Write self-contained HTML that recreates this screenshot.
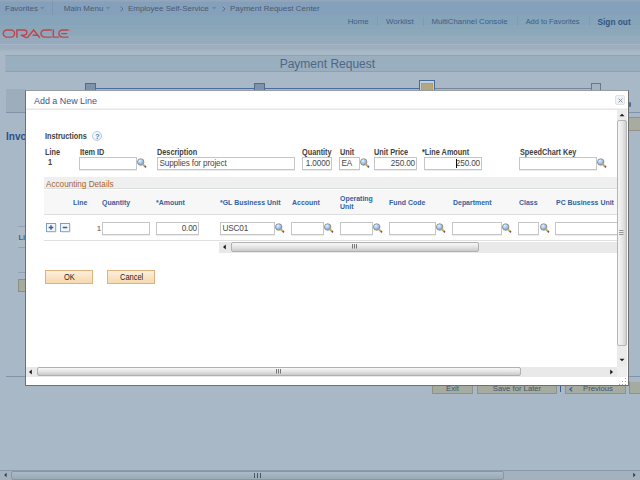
<!DOCTYPE html>
<html><head><meta charset="utf-8">
<style>
*{margin:0;padding:0;box-sizing:border-box}
html,body{width:640px;height:480px;overflow:hidden;background:#a9b8c7;font-family:"Liberation Sans",sans-serif}
div,span,svg{position:absolute;white-space:nowrap}
.nt{font-size:8px;color:#4b5b6f;top:5px;line-height:8px}
.lk{font-size:7.8px;color:#3e5e8a;top:18px;line-height:8px}
.sep{width:1px;background:#819ab0}
.lbl{font-size:8.3px;font-weight:bold;color:#404040;line-height:8px;transform:scaleX(0.88);transform-origin:0 0}
.inp{border:1px solid #c6c6c6;box-shadow:0 1px 0 #ececec;background:#fff;height:12px;font-size:8.2px;letter-spacing:-0.15px;color:#474747;line-height:12px;padding:0 1px 0 1.5px;overflow:hidden}
.r{text-align:right}
.hd{font-size:7.9px;font-weight:bold;color:#3462a0;line-height:8px;transform:scaleX(0.88);transform-origin:0 0}
.btn{background:#a6ab9f;border:1px solid #8e9388;border-top-color:#b4b8ae;font-size:7.7px;color:#44546a;text-align:center;line-height:14px}
</style></head><body>
<div style="left:0px;top:0px;width:640px;height:16px;background:#85a0bb"></div>
<div style="left:0px;top:0px;width:640px;height:1px;background:#93a6bb"></div>
<div style="left:0px;top:1px;width:640px;height:1px;background:#8ca3bb"></div>
<div class="nt" style="left:5px;top:5px;">Favorites</div>
<svg style="left:39.5px;top:7px" width="5" height="3"><path d="M0 0H4.5L2.25 2.5Z" fill="#6e87a2"/></svg>
<div style="left:52px;top:1px;width:1px;height:15px;background:#7d96ad"></div>
<div class="nt" style="left:63.8px;top:5px;">Main Menu</div>
<svg style="left:105.5px;top:7px" width="5" height="3"><path d="M0 0H4.5L2.25 2.5Z" fill="#6e87a2"/></svg>
<svg style="left:119.5px;top:6px" width="4" height="6"><path d="M0.6 0.6L3 3L0.6 5.4" fill="none" stroke="#5a6b80" stroke-width="0.9"/></svg>
<div class="nt" style="left:127.9px;top:5px;">Employee Self-Service</div>
<svg style="left:212.3px;top:7px" width="5" height="3"><path d="M0 0H4.5L2.25 2.5Z" fill="#6e87a2"/></svg>
<svg style="left:221.8px;top:6px" width="4" height="6"><path d="M0.6 0.6L3 3L0.6 5.4" fill="none" stroke="#5a6b80" stroke-width="0.9"/></svg>
<div class="nt" style="left:229.9px;top:5px;">Payment Request Center</div>
<div style="left:0px;top:15px;width:640px;height:1px;background:#8aa2b6"></div>
<div style="left:0px;top:16px;width:640px;height:10px;background:#86a4ba"></div>
<div style="left:0px;top:26px;width:640px;height:1px;background:#8ca8bb"></div>
<div style="left:0px;top:27px;width:640px;height:8px;background:linear-gradient(#89a6b9,#8ea8ba)"></div>
<div style="left:0px;top:35px;width:640px;height:9px;background:linear-gradient(#92aabb,#96acbd)"></div>
<div style="left:0px;top:37px;width:640px;height:1px;background:#95acbe"></div>
<div style="left:0px;top:40px;width:640px;height:1px;background:#97adbf"></div>
<div style="left:0px;top:44px;width:640px;height:1px;background:#a3b5c7"></div>
<div style="left:0px;top:45px;width:640px;height:1px;background:#9cafc1"></div>
<div style="left:0px;top:46px;width:640px;height:3px;background:#a0aec2"></div>
<div style="left:0px;top:49px;width:640px;height:1px;background:#a2b1c3"></div>
<div style="left:0px;top:50px;width:640px;height:1px;background:#a3b5bd"></div>
<div class="lk" style="left:347.7px;top:18px;">Home</div>
<div style="left:377px;top:17px;width:1px;height:9px;background:#819ab0"></div>
<div class="lk" style="left:386px;top:18px;">Worklist</div>
<div style="left:422.5px;top:17px;width:1px;height:9px;background:#819ab0"></div>
<div class="lk" style="left:431.4px;top:18px;">MultiChannel Console</div>
<div style="left:516.5px;top:17px;width:1px;height:9px;background:#819ab0"></div>
<div class="lk" style="left:525.7px;top:18px;font-size:7.4px">Add to Favorites</div>
<div style="left:588.5px;top:17px;width:1px;height:9px;background:#819ab0"></div>
<div class="lk" style="left:597.5px;top:18px;font-weight:bold;font-size:8.3px;color:#34547f">Sign out</div>
<svg style="left:0;top:27px" width="72" height="13" viewBox="0 27 72 13"><g fill="none" stroke="#bf4452" stroke-width="1.45">
<rect x="3.3" y="30" width="11.3" height="7.1" rx="3.55"/>
<path d="M16.9 37.8V30H24.2A2.6 2.6 0 0 1 24.2 35.2H20.8L26.8 37.8"/>
<path d="M27.4 37.8L33.6 30L39.8 37.8M32.6 35.3H37.3"/>
<path d="M51.8 30H44.5A3.55 3.55 0 0 0 44.5 37.1H51.8"/>
<path d="M53.3 29.4V37.1H59.2"/>
<path d="M68.6 30H62.4A3.55 3.55 0 0 0 62.4 37.1H68.6M61.3 33.6H67.2"/>
</g><circle cx="70.3" cy="30.2" r="0.7" fill="#c47a84"/></svg>
<div style="left:0px;top:51px;width:640px;height:4px;background:#aab9c8"></div>
<div style="left:5px;top:55px;width:635px;height:17px;background:#99aebe;border-top:1px solid #91a2b1;border-bottom:1px solid #8fa0af;border-left:1px solid #a0b2c1"></div>
<div style="left:279.7px;top:57px;font-size:12px;color:#4d6786;line-height:14px">Payment Request</div>
<div style="left:95px;top:88px;width:325px;height:1px;background:#4b6b9b"></div>
<div style="left:435px;top:88px;width:156px;height:1px;background:#72869c"></div>
<div style="left:85px;top:83px;width:11px;height:8px;background:#7b93ad;border:1px solid #4f6d90;border-bottom:none"></div>
<div style="left:254px;top:83px;width:11px;height:8px;background:#7b93ad;border:1px solid #4f6d90;border-bottom:none"></div>
<div style="left:419px;top:80px;width:16px;height:11px;background:#c3d0dc;border:1px solid #4a6b98;border-bottom:none"></div>
<div style="left:421px;top:82.5px;width:11.5px;height:9px;background:#b0a783;border:1px solid #be9a55;border-bottom:none"></div>
<div style="left:591px;top:83px;width:10px;height:8px;background:#a2b3c2;border:1px solid #64798f;border-bottom:none"></div>
<div style="left:6px;top:89px;width:20px;height:23px;background:#9eadbb"></div>
<div style="left:6px;top:112px;width:634px;height:1px;background:#7f94a9"></div>
<div style="left:628px;top:117px;width:12px;height:14px;background:#a7aba0;border-top:1px solid #958f84;border-bottom:1px solid #958f84"></div>
<div style="left:629px;top:102px;width:2px;height:5px;background:#4a6d9c;border-radius:1px"></div>
<div style="left:6px;top:131.5px;font-size:10px;font-weight:bold;color:#2b5087;line-height:10px">Invo</div>
<div style="left:18px;top:227px;width:8px;height:20px;background:#abbac4"></div>
<div style="left:18px;top:226px;width:8px;height:1px;background:#90a2b4"></div>
<div style="left:18.5px;top:233.5px;font-size:7.5px;font-weight:bold;color:#3b6090;line-height:8px">Li</div>
<div style="left:18px;top:247px;width:8px;height:1px;background:#90a2b4"></div>
<div style="left:18px;top:272px;width:8px;height:1px;background:#90a2b4"></div>
<div style="left:18px;top:279px;width:8px;height:13px;background:#a6aba0;border:1px solid #8c8f86"></div>
<div style="left:6px;top:376px;width:634px;height:1px;background:#7f94a9"></div>
<div class="btn" style="left:432px;top:381px;width:41px;height:13px">Exit</div>
<div class="btn" style="left:477px;top:381px;width:80px;height:13px">Save for Later</div>
<div style="left:560px;top:386px;width:1px;height:6px;background:#3d5c96"></div>
<div class="btn" style="left:565px;top:381px;width:61px;height:13px"><svg style="left:2.5px;top:4.5px" width="4" height="5"><path d="M3.2 0.3L0.8 2.3L3.2 4.3" fill="none" stroke="#3b5fa8" stroke-width="1.2"/></svg><span style="left:17px;top:0">Previous</span></div>
<div class="btn" style="left:629px;top:381px;width:20px;height:13px"></div>
<div style="left:0px;top:470px;width:640px;height:10px;background:#a4b2bf;border-top:1px solid #8a9aa8"></div>
<div style="left:11px;top:471px;width:493px;height:9px;background:linear-gradient(#aebbc7,#9aa9b6);border:1px solid #8797a6;border-radius:2px"></div>
<div style="left:254px;top:473px;width:7px;height:5px;border-left:1px solid #4a5866;border-right:1px solid #4a5866"></div>
<div style="left:257px;top:473px;width:1px;height:5px;background:#4a5866"></div>
<svg style="left:3px;top:472px" width="5" height="6"><path d="M3.6 0.8L1.2 3L3.6 5.2Z" fill="#2f3a45"/></svg>
<svg style="left:632px;top:472px" width="5" height="6"><path d="M1.2 0.8L3.6 3L1.2 5.2Z" fill="#2f3a45"/></svg>
<svg width="0" height="0" style="position:absolute"><defs><radialGradient id="lg" cx="35%" cy="30%" r="75%"><stop offset="0" stop-color="#e8f4ff"/><stop offset="1" stop-color="#5f9de4"/></radialGradient></defs></svg>
<div style="left:25px;top:90px;width:604px;height:296px;background:#fff;border:1px solid #6f6f6f;border-top-color:#979ca2"></div>
<div style="left:34px;top:96px;font-size:9.4px;color:#335890;line-height:9px;transform:scaleX(0.95);transform-origin:0 0">Add a New Line</div>
<div style="left:615px;top:95px;width:10px;height:10px;background:#f1f1f1;border:1px solid #e2e2e2;border-radius:2px"><svg style="left:1px;top:1px" width="7" height="7"><path d="M1.6 1.6L5.4 5.4M5.4 1.6L1.6 5.4" stroke="#8397ab" stroke-width="1"/></svg></div>
<div style="left:26px;top:108px;width:602px;height:1px;background:#f2f2f2"></div>
<div style="left:26px;top:109px;width:602px;height:1px;background:#e1e8e7"></div>
<div style="left:26px;top:110px;width:591px;height:257px;overflow:hidden"><div style="left:-26px;top:-110px;width:640px;height:480px">
<div class="lbl" style="left:44.6px;top:132px;">Instructions</div>
<div style="left:92px;top:131px;width:10px;height:10px;border-radius:50%;border:1px solid #b7c9dc;background:radial-gradient(circle at 40% 35%,#ffffff,#dfe9f3)"></div>
<div style="left:95px;top:133px;font-size:7.5px;font-weight:bold;color:#4f7fbf;line-height:8px">?</div>
<div class="lbl" style="left:44.6px;top:148px;">Line</div>
<div class="lbl" style="left:79.6px;top:148px;">Item ID</div>
<div class="lbl" style="left:157px;top:148px;">Description</div>
<div class="lbl" style="left:302px;top:148px;">Quantity</div>
<div class="lbl" style="left:339.7px;top:148px;">Unit</div>
<div class="lbl" style="left:374.4px;top:148px;">Unit Price</div>
<div class="lbl" style="left:421.9px;top:148px;">*Line Amount</div>
<div class="lbl" style="left:519.9px;top:148px;">SpeedChart Key</div>
<div class="lbl" style="left:48.2px;top:158.2px;">1</div>
<div class="inp" style="left:79px;top:157px;width:58px;height:13px"></div>
<svg style="left:137px;top:157.5px" width="11" height="11" viewBox="0 0 11 11"><circle cx="3.7" cy="4" r="3.25" fill="url(#lg)" stroke="#8b8575" stroke-width="0.8"/><line x1="5.6" y1="6" x2="8.1" y2="8.5" stroke="#e6a24c" stroke-width="1.8"/><line x1="7.8" y1="8.2" x2="9" y2="9.4" stroke="#45648c" stroke-width="1.7"/></svg>
<div class="inp" style="left:157px;top:157px;width:138px;height:13px">Supplies for project</div>
<div class="inp r" style="left:302px;top:157px;width:30px;height:13px">1.0000</div>
<div class="inp" style="left:339px;top:157px;width:20.5px;height:13px">EA</div>
<svg style="left:359.5px;top:157.5px" width="11" height="11" viewBox="0 0 11 11"><circle cx="3.7" cy="4" r="3.25" fill="url(#lg)" stroke="#8b8575" stroke-width="0.8"/><line x1="5.6" y1="6" x2="8.1" y2="8.5" stroke="#e6a24c" stroke-width="1.8"/><line x1="7.8" y1="8.2" x2="9" y2="9.4" stroke="#45648c" stroke-width="1.7"/></svg>
<div class="inp r" style="left:374px;top:157px;width:43px;height:13px">250.00</div>
<div class="inp r" style="left:424px;top:157px;width:58px;height:13px">250.00</div>
<div style="left:456px;top:159px;width:1px;height:9px;background:#111"></div>
<div class="inp" style="left:519px;top:157px;width:78px;height:13px"></div>
<svg style="left:597px;top:157.5px" width="11" height="11" viewBox="0 0 11 11"><circle cx="3.7" cy="4" r="3.25" fill="url(#lg)" stroke="#8b8575" stroke-width="0.8"/><line x1="5.6" y1="6" x2="8.1" y2="8.5" stroke="#e6a24c" stroke-width="1.8"/><line x1="7.8" y1="8.2" x2="9" y2="9.4" stroke="#45648c" stroke-width="1.7"/></svg>
<div style="left:44px;top:177px;width:580px;height:12px;background:#efefef;border-bottom:1px solid #d9dfdd"></div>
<div style="left:45.5px;top:180px;font-size:8.6px;color:#aa6230;line-height:8px;transform:scaleX(0.95);transform-origin:0 0">Accounting Details</div>
<div style="left:44px;top:190px;width:580px;height:25px;background:#f7f7f7;border-bottom:1px solid #dedede"></div>
<div class="hd" style="left:72.8px;top:198.6px;">Line</div>
<div class="hd" style="left:102px;top:198.6px;">Quantity</div>
<div class="hd" style="left:156px;top:198.6px;">*Amount</div>
<div class="hd" style="left:220.3px;top:198.6px;">*GL Business Unit</div>
<div class="hd" style="left:291.7px;top:198.6px;">Account</div>
<div class="hd" style="left:389.3px;top:198.6px;">Fund Code</div>
<div class="hd" style="left:452.8px;top:198.6px;">Department</div>
<div class="hd" style="left:519px;top:198.6px;">Class</div>
<div class="hd" style="left:556.2px;top:198.6px;">PC Business Unit</div>
<div class="hd" style="left:340.3px;top:194.5px;">Operating</div>
<div class="hd" style="left:340.3px;top:203px;">Unit</div>
<div style="left:44px;top:240px;width:580px;height:1px;background:#e0e0e0"></div>
<svg style="left:46px;top:223px" width="11" height="10"><rect x="0.5" y="0.5" width="9" height="8" fill="#f3f6f9" stroke="#7f9fc2" stroke-width="1"/><path d="M10 1V9H1" fill="none" stroke="#c3ced9" stroke-width="0.8"/><path d="M5 2.2V6.8M2.7 4.5H7.3" stroke="#2c66ad" stroke-width="1.5"/></svg>
<svg style="left:60px;top:223px" width="11" height="10"><rect x="0.5" y="0.5" width="9" height="8" fill="#f3f6f9" stroke="#7f9fc2" stroke-width="1"/><path d="M10 1V9H1" fill="none" stroke="#c3ced9" stroke-width="0.8"/><path d="M2.7 4.5H7.3" stroke="#2c66ad" stroke-width="1.5"/></svg>
<div style="left:96.8px;top:225px;font-size:8px;color:#505050;line-height:8px">1</div>
<div class="inp" style="left:102px;top:222px;width:48px;height:13px"></div>
<div class="inp r" style="left:156px;top:222px;width:43px;height:13px">0.00</div>
<div class="inp" style="left:220px;top:222px;width:55px;height:13px">USC01</div>
<svg style="left:275px;top:223px" width="11" height="11" viewBox="0 0 11 11"><circle cx="3.7" cy="4" r="3.25" fill="url(#lg)" stroke="#8b8575" stroke-width="0.8"/><line x1="5.6" y1="6" x2="8.1" y2="8.5" stroke="#e6a24c" stroke-width="1.8"/><line x1="7.8" y1="8.2" x2="9" y2="9.4" stroke="#45648c" stroke-width="1.7"/></svg>
<div class="inp" style="left:291px;top:222px;width:33px;height:13px"></div>
<svg style="left:324px;top:223px" width="11" height="11" viewBox="0 0 11 11"><circle cx="3.7" cy="4" r="3.25" fill="url(#lg)" stroke="#8b8575" stroke-width="0.8"/><line x1="5.6" y1="6" x2="8.1" y2="8.5" stroke="#e6a24c" stroke-width="1.8"/><line x1="7.8" y1="8.2" x2="9" y2="9.4" stroke="#45648c" stroke-width="1.7"/></svg>
<div class="inp" style="left:340px;top:222px;width:33px;height:13px"></div>
<svg style="left:373px;top:223px" width="11" height="11" viewBox="0 0 11 11"><circle cx="3.7" cy="4" r="3.25" fill="url(#lg)" stroke="#8b8575" stroke-width="0.8"/><line x1="5.6" y1="6" x2="8.1" y2="8.5" stroke="#e6a24c" stroke-width="1.8"/><line x1="7.8" y1="8.2" x2="9" y2="9.4" stroke="#45648c" stroke-width="1.7"/></svg>
<div class="inp" style="left:389px;top:222px;width:47px;height:13px"></div>
<svg style="left:436px;top:223px" width="11" height="11" viewBox="0 0 11 11"><circle cx="3.7" cy="4" r="3.25" fill="url(#lg)" stroke="#8b8575" stroke-width="0.8"/><line x1="5.6" y1="6" x2="8.1" y2="8.5" stroke="#e6a24c" stroke-width="1.8"/><line x1="7.8" y1="8.2" x2="9" y2="9.4" stroke="#45648c" stroke-width="1.7"/></svg>
<div class="inp" style="left:452px;top:222px;width:50px;height:13px"></div>
<svg style="left:502px;top:223px" width="11" height="11" viewBox="0 0 11 11"><circle cx="3.7" cy="4" r="3.25" fill="url(#lg)" stroke="#8b8575" stroke-width="0.8"/><line x1="5.6" y1="6" x2="8.1" y2="8.5" stroke="#e6a24c" stroke-width="1.8"/><line x1="7.8" y1="8.2" x2="9" y2="9.4" stroke="#45648c" stroke-width="1.7"/></svg>
<div class="inp" style="left:518px;top:222px;width:21px;height:13px"></div>
<svg style="left:539.5px;top:223px" width="11" height="11" viewBox="0 0 11 11"><circle cx="3.7" cy="4" r="3.25" fill="url(#lg)" stroke="#8b8575" stroke-width="0.8"/><line x1="5.6" y1="6" x2="8.1" y2="8.5" stroke="#e6a24c" stroke-width="1.8"/><line x1="7.8" y1="8.2" x2="9" y2="9.4" stroke="#45648c" stroke-width="1.7"/></svg>
<div class="inp" style="left:555px;top:222px;width:80px;height:13px"></div>
<div style="left:219px;top:242px;width:400px;height:11px;background:#e9e9e9"></div>
<svg style="left:222px;top:244px" width="5" height="6"><path d="M3.8 0.5L1 3L3.8 5.5Z" fill="#1a1a1a"/></svg>
<div style="left:231px;top:242px;width:248px;height:10px;background:linear-gradient(#f8f8f8,#e2e2e2 55%,#c9c9c9);border:1px solid #b0b0b0;border-radius:2px"></div>
<svg style="left:352px;top:244px" width="5" height="5"><path d="M0.5 0V4.5M2.5 0V4.5M4.5 0V4.5" stroke="#6a6a6a" stroke-width="0.9"/></svg>
<div style="left:45px;top:270px;width:48px;height:14px;background:linear-gradient(#fdeeda,#f6d9ae);border:1px solid #e0b37e"></div>
<div style="left:107px;top:270px;width:48px;height:14px;background:linear-gradient(#fdeeda,#f6d9ae);border:1px solid #e0b37e"></div>
<div style="left:63.8px;top:273.3px;font-size:8.5px;color:#1e1e1e;line-height:8.5px;transform:scaleX(0.88);transform-origin:0 0">OK</div>
<div style="left:119.7px;top:273.3px;font-size:8.5px;color:#1e1e1e;line-height:8.5px;transform:scaleX(0.88);transform-origin:0 0">Cancel</div>
</div></div>
<div style="left:617px;top:110px;width:11px;height:257px;background:#ebebeb"></div>
<svg style="left:619px;top:113px" width="6" height="4"><path d="M0.5 3.3L3 0.8L5.5 3.3Z" fill="#1a1a1a"/></svg>
<div style="left:617px;top:120px;width:10px;height:226px;background:linear-gradient(90deg,#f6f6f6,#e6e6e6 55%,#cfcfcf);border:1px solid #b5b5b5;border-radius:2px"></div>
<svg style="left:619px;top:230px" width="5" height="5"><path d="M0 0.5H4.5M0 2.5H4.5M0 4.5H4.5" stroke="#8d8d8d" stroke-width="0.9"/></svg>
<svg style="left:619px;top:358px" width="6" height="4"><path d="M0.5 0.7L3 3.2L5.5 0.7Z" fill="#1a1a1a"/></svg>
<div style="left:627px;top:110px;width:1px;height:275px;background:#fafafa"></div>
<div style="left:26px;top:367px;width:591px;height:10px;background:#e9e9e9"></div>
<div style="left:617px;top:367px;width:10px;height:10px;background:#efefef"></div>
<svg style="left:28px;top:369px" width="5" height="6"><path d="M3.8 0.5L1 3L3.8 5.5Z" fill="#1a1a1a"/></svg>
<div style="left:37px;top:367px;width:484px;height:9px;background:linear-gradient(#f8f8f8,#e2e2e2 55%,#c9c9c9);border:1px solid #b0b0b0;border-radius:2px"></div>
<svg style="left:276px;top:369px" width="5" height="5"><path d="M0.5 0V4.5M2.5 0V4.5M4.5 0V4.5" stroke="#6a6a6a" stroke-width="0.9"/></svg>
<svg style="left:609px;top:369px" width="5" height="6"><path d="M1.2 0.5L4 3L1.2 5.5Z" fill="#1a1a1a"/></svg>
<svg style="left:619px;top:377px" width="9" height="8"><g fill="#9a9a9a"><rect x="6" y="1" width="1" height="1"/><rect x="3" y="4" width="1" height="1"/><rect x="6" y="4" width="1" height="1"/><rect x="0" y="7" width="1" height="1"/><rect x="3" y="7" width="1" height="1"/><rect x="6" y="7" width="1" height="1"/></g></svg>
</body></html>
